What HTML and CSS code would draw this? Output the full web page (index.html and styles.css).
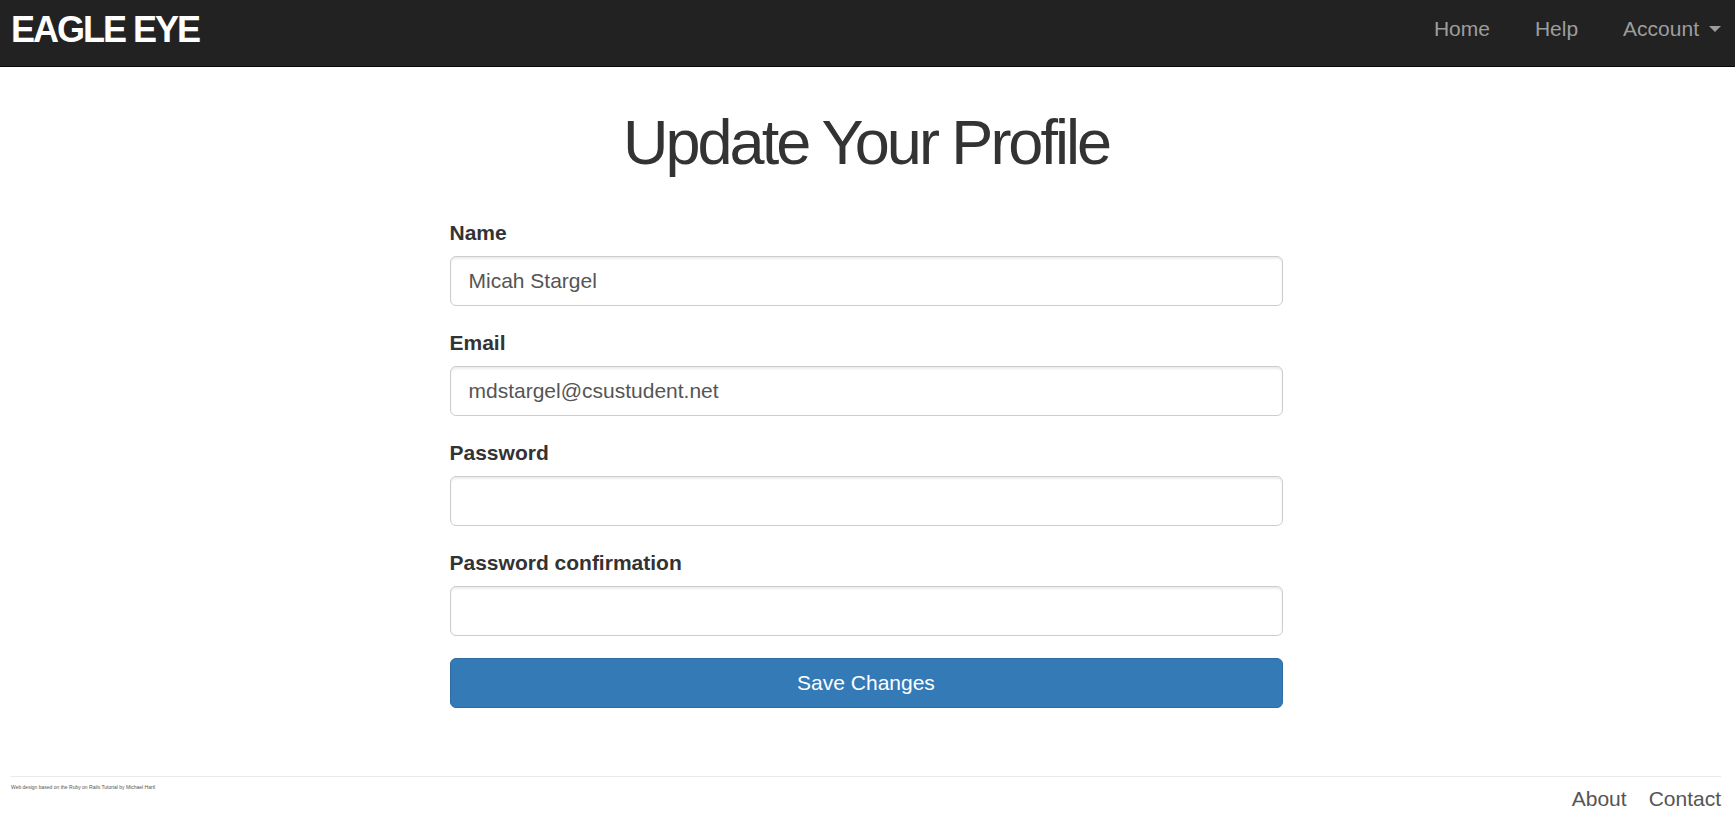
FILE: index.html
```html
<!DOCTYPE html>
<html lang="en">
<head>
<meta charset="utf-8">
<meta name="viewport" content="width=device-width, initial-scale=1">
<title>Update Your Profile | Eagle Eye</title>
<link rel="stylesheet" href="styles.css">
</head>
<body>
<header class="navbar">
  <a class="logo" href="#">EAGLE EYE</a>
  <nav class="nav">
    <a class="nav-link" href="#">Home</a>
    <a class="nav-link" href="#">Help</a>
    <button class="nav-link nav-toggle" type="button" aria-haspopup="true">Account<span class="caret"></span></button>
  </nav>
</header>
<div class="container">
  <main>
    <h1 class="title">Update Your Profile</h1>
    <form class="profile-form">
      <label class="label" for="name">Name</label>
      <input class="control" id="name" type="text" value="Micah Stargel">
      <label class="label" for="email">Email</label>
      <input class="control" id="email" type="email" value="mdstargel@csustudent.net">
      <label class="label" for="password">Password</label>
      <input class="control" id="password" type="password">
      <label class="label" for="confirmation">Password confirmation</label>
      <input class="control" id="confirmation" type="password">
      <button class="submit" type="submit">Save Changes</button>
    </form>
  </main>
  <footer class="footer">
    <small class="credit">Web design based on the <a href="#">Ruby on Rails Tutorial</a> by <a href="#">Michael Hartl</a></small>
    <nav class="footer-nav">
      <a href="#">About</a>
      <a href="#">Contact</a>
    </nav>
  </footer>
</div>
</body>
</html>
```
FILE: styles.css
```css
* {
  box-sizing: border-box;
}

body {
  margin: 0;
  background: #fff;
  color: #333;
  font-family: "Liberation Sans", Arial, sans-serif;
  font-size: 21px;
  line-height: 30px;
}

a {
  color: inherit;
  text-decoration: none;
}

.navbar {
  display: flex;
  justify-content: space-between;
  align-items: flex-start;
  min-height: 67px;
  padding: 14px 14px 0 11px;
  background: #222;
  border-bottom: 1px solid #080808;
}

.logo {
  color: #fff;
  font-size: 36px;
  font-weight: bold;
  letter-spacing: -2px;
  line-height: 32px;
}

.nav {
  display: flex;
  gap: 45px;
}

.nav-link {
  color: #9d9d9d;
}

.nav-toggle {
  display: flex;
  align-items: center;
  gap: 10px;
  padding: 0;
  border: 0;
  background: none;
  font: inherit;
}

.caret {
  border-top: 6px solid;
  border-right: 6px solid transparent;
  border-left: 6px solid transparent;
}

.container {
  padding: 0 14px 0 11px;
}

.title {
  margin: 40px 0 41px;
  font-size: 63px;
  font-weight: normal;
  letter-spacing: -3px;
  line-height: 70px;
  text-align: center;
}

.profile-form {
  width: calc(50% - 22px);
  margin: 0 auto;
}

.label {
  display: block;
  margin-bottom: 8px;
  font-weight: bold;
}

.control {
  display: block;
  width: 100%;
  height: 50px;
  margin-bottom: 22px;
  padding: 8px 18px;
  border: 1px solid #ccc;
  border-radius: 6px;
  background: #fff;
  box-shadow: inset 0 2px 2px rgba(0, 0, 0, 0.075);
  color: #555;
  font: inherit;
}

.submit {
  display: block;
  width: 100%;
  height: 50px;
  padding: 8px 18px;
  border: 1px solid #2e6da4;
  border-radius: 6px;
  background: #337ab7;
  color: #fff;
  font: inherit;
}

.footer {
  display: flex;
  justify-content: space-between;
  align-items: flex-start;
  margin-top: 68px;
  padding-top: 7px;
  border-top: 1px solid #eaeaea;
  color: #555;
}

.credit {
  font-size: 5px;
  line-height: 6px;
}

.footer-nav {
  display: flex;
  gap: 22px;
}
```
